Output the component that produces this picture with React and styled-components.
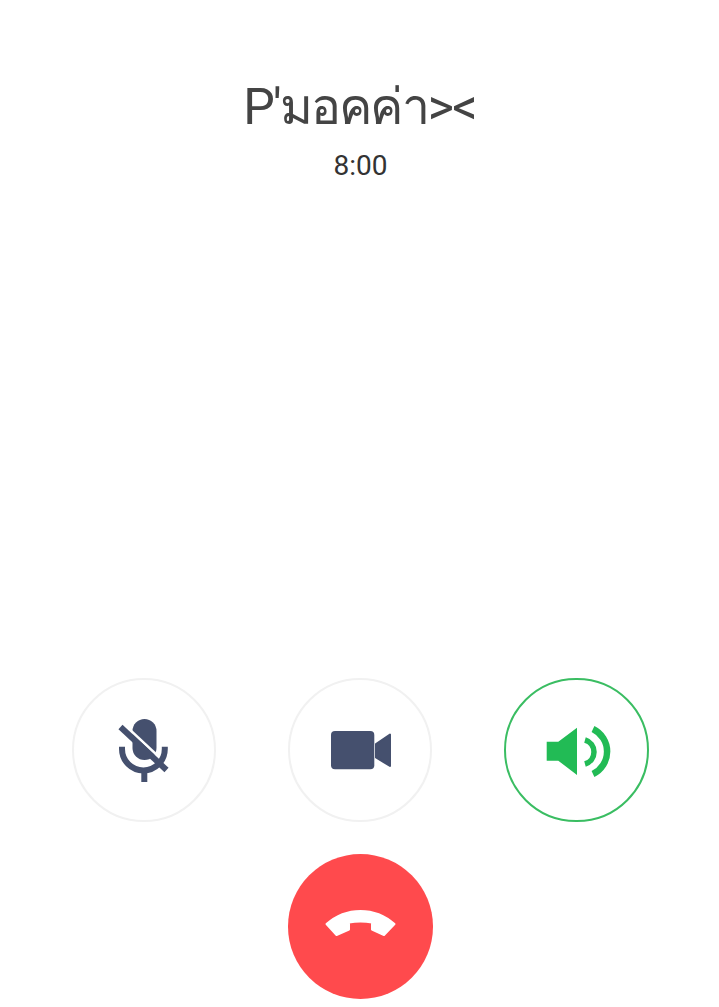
import React from "react";
import styled, { createGlobalStyle } from "styled-components";

const GlobalStyle = createGlobalStyle`
  html, body {
    margin: 0;
    padding: 0;
    background: #fff;
  }
`;

const Screen = styled.div`
  width: 719px;
  height: 1007px;
  overflow: hidden;
  display: flex;
  flex-direction: column;
  align-items: center;
  font-family: Roboto, "Noto Sans", "DejaVu Sans", sans-serif;
  background: #fff;
`;

const Header = styled.header`
  margin-top: 78px;
  height: 600px;
  display: flex;
  flex-direction: column;
  align-items: center;
`;

const Name = styled.h1`
  margin: 0;
  font-size: 50px;
  line-height: 58px;
  font-weight: 400;
  letter-spacing: -1.8px;
  color: #444;
`;

const Timer = styled.div`
  margin: 13px 0 0 2px;
  font-size: 28px;
  line-height: 34px;
  color: #333;
`;

const Controls = styled.div`
  display: flex;
  gap: 72px;
  margin-left: 1.6px;
`;

const RoundButton = styled.button`
  width: 144.4px;
  height: 144.4px;
  padding: 0;
  box-sizing: border-box;
  border-radius: 50%;
  border: 2px solid ${(p) => (p.$active ? "#3abd62" : "#f1f1f1")};
  background: #fff;
  display: block;
`;

const Icon = styled.svg`
  display: block;
  margin: -2px;
  width: 144px;
  height: 144px;
`;

const HangUp = styled.button`
  margin: 32px 0 0 2px;
  width: 145px;
  height: 145px;
  padding: 0;
  border: 0;
  border-radius: 50%;
  background: #ff4a4d;
  display: block;
`;

const MicOff = () => (
  <Icon viewBox="0 0 144 144">
    <rect x="60.5" y="41" width="24" height="41" rx="12" fill="#45506e" />
    <path d="M50 68.7V71a21.4 21.4 0 0 0 42.8 0V68.7" fill="none" stroke="#45506e" strokeWidth="6" />
    <rect x="69.3" y="92" width="6" height="12" fill="#45506e" />
    <path d="M57.500 51.500L87 79" stroke="#fff" strokeWidth="2.500" />
    <path d="M48.500 49L94.500 92" stroke="#45506e" strokeWidth="6" />
  </Icon>
);

const Video = () => (
  <Icon viewBox="0 0 144 144">
    <rect x="43" y="53" width="43.3" height="38.3" rx="4" fill="#45506e" />
    <path d="M88 66L102 56.500V88L88 79.500Z" fill="#45506e" stroke="#45506e" strokeWidth="2" strokeLinejoin="round" />
  </Icon>
);

const Speaker = () => (
  <Icon viewBox="0 0 144 144">
    <path d="M42.7 63.7H54.3L73 49.7V97L54.3 82.7H42.7Z" fill="#22bb55" />
    <path d="M81 62A12.500 12.500 0 0 1 81 86" fill="none" stroke="#22bb55" strokeWidth="5.500" />
    <path d="M89 51A25 25 0 0 1 89 96" fill="none" stroke="#22bb55" strokeWidth="6.500" />
  </Icon>
);

const Receiver = () => (
  <svg viewBox="0 0 145 145" width="145" height="145" style={{ display: "block" }}>
    <path
      d="M38.500 70C58 52.500 87 52.500 106.500 70L96 81L84 75.500V68.5Q72.500 66.500 61 68.500V75.500L48.500 81Z"
      fill="#fff"
      stroke="#fff"
      strokeWidth="2"
      strokeLinejoin="round"
    />
  </svg>
);

export default function App() {
  return (
    <>
      <GlobalStyle />
      <Screen>
        <Header>
          <Name>P'มอคค่า&gt;&lt;</Name>
          <Timer>8:00</Timer>
        </Header>
        <Controls>
          <RoundButton aria-label="mute"><MicOff /></RoundButton>
          <RoundButton aria-label="video"><Video /></RoundButton>
          <RoundButton aria-label="speaker" $active><Speaker /></RoundButton>
        </Controls>
        <HangUp aria-label="end call"><Receiver /></HangUp>
      </Screen>
    </>
  );
}
